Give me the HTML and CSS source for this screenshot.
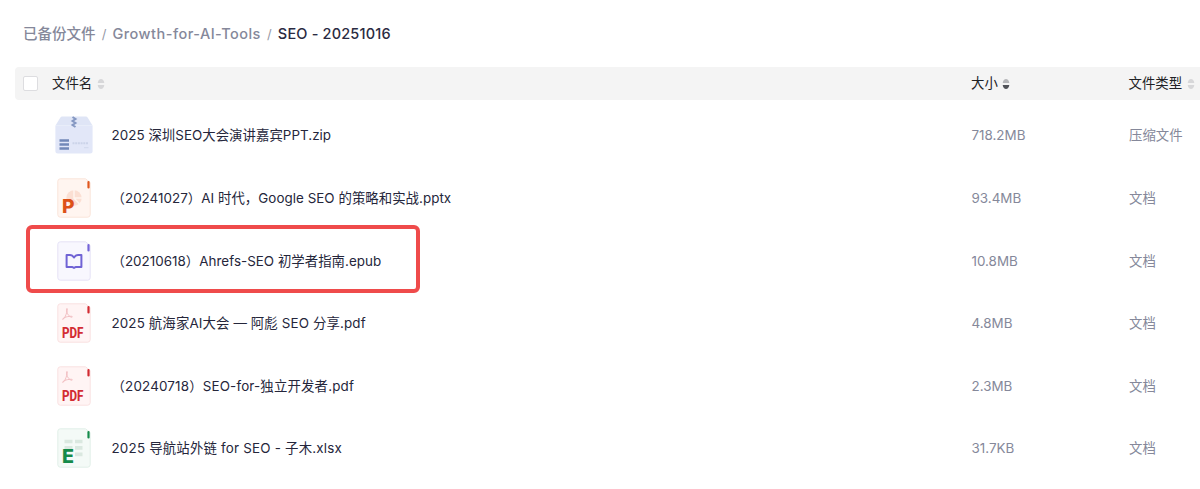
FILE: index.html
```html
<!DOCTYPE html>
<html lang="zh-CN">
  <head>
    <meta charset="UTF-8" />
    <title>已备份文件</title>
    <link rel="stylesheet" href="styles.css">
  </head>
  <body>
    <nav class="breadcrumb">
      <a class="crumb crumb-root">已备份文件</a>
      <span class="sep">/</span>
      <a class="crumb crumb-folder">Growth-for-AI-Tools</a>
      <span class="sep">/</span>
      <span class="crumb current">SEO - 20251016</span>
    </nav>

    <div class="file-table">
      <div class="table-head">
        <div class="head-name">
          <span class="checkbox"></span>
          <span>文件名</span>
          <svg class="sort" viewBox="0 0 8 12"><path class="up" d="M.7 5C1 2.5 2.5 1 4 1s3 1.5 3.3 4z" /><path class="down" d="M.7 7C1 9.5 2.5 11 4 11s3-1.5 3.3-4z" /></svg>
        </div>
        <div class="head-size">
          <span>大小</span>
          <svg class="sort desc" viewBox="0 0 8 12"><path class="up" d="M.7 5C1 2.5 2.5 1 4 1s3 1.5 3.3 4z" /><path class="down" d="M.7 7C1 9.5 2.5 11 4 11s3-1.5 3.3-4z" /></svg>
        </div>
        <div class="head-type">
          <span>文件类型</span>
          <svg class="sort" viewBox="0 0 8 12"><path class="up" d="M.7 5C1 2.5 2.5 1 4 1s3 1.5 3.3 4z" /><path class="down" d="M.7 7C1 9.5 2.5 11 4 11s3-1.5 3.3-4z" /></svg>
        </div>
      </div>

      <div class="table-row">
        <div class="icon">
          <svg width="38" height="38" viewBox="0 0 38 38">
            <path d="M7 .6h24a2 2 0 0 1 1.600.8L37.500 9.500H.5L5.400 1.400A2 2 0 0 1 7 .6z" fill="#dfe5f6" />
            <path d="M.4 9.500h37.200v25.500a2.500 2.500 0 0 1-2.500 2.500H2.900a2.500 2.500 0 0 1-2.500-2.500z" fill="#e2e7f8" />
            <path d="M17.500 1l3 2-3 2 3 2-3 2 3 2" fill="none" stroke="#8598c2" stroke-width="2" />
            <path d="M4.500 24.500H14M4.500 28.500H14M4.500 32.500H14" stroke="#7389b8" stroke-width="2.600" />
            <path d="M17.500 27.200h16" stroke="#ccd4e9" stroke-width="2" stroke-dasharray="2 .7" />
            <path d="M29 31.700h4.500" stroke="#d0d8ec" />
          </svg>
        </div>
        <div class="name name-zip">2025 深圳SEO大会演讲嘉宾PPT.zip</div>
        <div class="size">718.2MB</div>
        <div class="type">压缩文件</div>
      </div>

      <div class="table-row">
        <div class="icon">
          <svg width="34" height="40" viewBox="0 0 34 40">
            <path class="page" d="M3.300.8h25.200l4.700 3.700v32.200a2.500 2.500 0 0 1-2.500 2.500H3.300a2.500 2.500 0 0 1-2.500-2.500V3.300A2.500 2.500 0 0 1 3.300.8z" fill="#fff5f0" stroke="#fae4da" />
            <circle cx="17" cy="20" r="7.700" fill="#fbdfd3" />
            <path d="M17 11.500v8.500h8.500M17 20l5.500 6" fill="none" stroke="#fff5f0" stroke-width="1.500" />
            <path class="tab" d="M31.500 4v5.500" stroke="#e0571e" />
            <text class="letter" x="5" y="34.500" fill="#dd5118" textLength="12.500" lengthAdjust="spacingAndGlyphs">P</text>
          </svg>
        </div>
        <div class="name name-pptx">（20241027）AI 时代，Google SEO 的策略和实战.pptx</div>
        <div class="size">93.4MB</div>
        <div class="type">文档</div>
      </div>

      <div class="table-row marked">
        <div class="icon">
          <svg width="34" height="40" viewBox="0 0 34 40">
            <path class="page" d="M3.300.8h25.200l4.700 3.700v32.200a2.500 2.500 0 0 1-2.500 2.500H3.300a2.500 2.500 0 0 1-2.500-2.500V3.300A2.500 2.500 0 0 1 3.300.8z" fill="#f8f7fe" stroke="#e5e2f6" />
            <path class="tab" d="M31.500 4v5.500" stroke="#7464d8" />
            <path d="M17 16.500c-1-1.600-2.200-2.400-4-2.400H9.600v11.800h5.400l2 1 2-1h5.400V14.100H21c-1.800 0-3 .8-4 2.400z" fill="none" stroke="#7063d5" stroke-width="2" stroke-linejoin="round" />
          </svg>
        </div>
        <div class="name name-epub">（20210618）Ahrefs-SEO 初学者指南.epub</div>
        <div class="size">10.8MB</div>
        <div class="type">文档</div>
      </div>

      <div class="table-row">
        <div class="icon">
          <svg width="34" height="40" viewBox="0 0 34 40">
            <path class="page" d="M3.300.8h25.200l4.700 3.700v32.200a2.500 2.500 0 0 1-2.500 2.500H3.300a2.500 2.500 0 0 1-2.500-2.500V3.300A2.500 2.500 0 0 1 3.300.8z" fill="#fff4f4" stroke="#f9e1e1" />
            <path d="M10 5.500c-1.100 0-.2 4.500 1 6 1.300 2 4 3.500 4.300 2.300.3-1-5.200-.5-7.800.8-2.200 1.100-2.300 2-1.500 1.700 2.300-.7 5.300-10.800 4-10.800z" fill="none" stroke="#efb9bc" stroke-width=".9" />
            <path class="tab" d="M31.500 4v5.500" stroke="#d22a31" />
            <text class="pdf" x="5" y="34.500" textLength="21.500" lengthAdjust="spacingAndGlyphs">PDF</text>
          </svg>
        </div>
        <div class="name name-share">2025 航海家AI大会 — 阿彪 SEO 分享.pdf</div>
        <div class="size">4.8MB</div>
        <div class="type">文档</div>
      </div>

      <div class="table-row">
        <div class="icon">
          <svg width="34" height="40" viewBox="0 0 34 40">
            <path class="page" d="M3.300.8h25.200l4.700 3.700v32.200a2.500 2.500 0 0 1-2.500 2.500H3.300a2.500 2.500 0 0 1-2.500-2.500V3.300A2.500 2.500 0 0 1 3.300.8z" fill="#fff4f4" stroke="#f9e1e1" />
            <path d="M10 5.500c-1.100 0-.2 4.500 1 6 1.300 2 4 3.500 4.300 2.300.3-1-5.200-.5-7.800.8-2.200 1.100-2.300 2-1.500 1.700 2.300-.7 5.300-10.800 4-10.800z" fill="none" stroke="#efb9bc" stroke-width=".9" />
            <path class="tab" d="M31.500 4v5.500" stroke="#d22a31" />
            <text class="pdf" x="5" y="34.500" textLength="21.500" lengthAdjust="spacingAndGlyphs">PDF</text>
          </svg>
        </div>
        <div class="name name-dev">（20240718）SEO-for-独立开发者.pdf</div>
        <div class="size">2.3MB</div>
        <div class="type">文档</div>
      </div>

      <div class="table-row">
        <div class="icon">
          <svg width="34" height="40" viewBox="0 0 34 40">
            <path class="page" d="M3.300.8h25.200l4.700 3.700v32.200a2.500 2.500 0 0 1-2.500 2.500H3.300a2.500 2.500 0 0 1-2.500-2.500V3.300A2.500 2.500 0 0 1 3.300.8z" fill="#f4faf7" stroke="#e1efe8" />
            <path d="M7.500 13.500h8M18 13.500h7.500M7.500 19.800h8M18 19.800h7.500M18 26.300h7.500" stroke="#dae8e0" stroke-width="3.700" />
            <path class="tab" d="M31.500 4v5.500" stroke="#168c4c" />
            <text class="letter" x="5" y="34.500" fill="#148b4a" textLength="12" lengthAdjust="spacingAndGlyphs">E</text>
          </svg>
        </div>
        <div class="name name-xlsx">2025 导航站外链 for SEO - 子木.xlsx</div>
        <div class="size">31.7KB</div>
        <div class="type">文档</div>
      </div>
    </div>
  </body>
</html>
```

FILE: styles.css
```css
body {
  margin: 0;
  padding: 22px 0 0 15px;
  font-family: Inter, "Noto Sans CJK SC", sans-serif;
  font-size: 13.4px;
  line-height: 20px;
  color: #25263b;
  background: #fff;
  overflow: hidden;
}

.breadcrumb {
  display: flex;
  align-items: center;
  height: 24px;
  padding-left: 8px;
  margin-bottom: 21px;
  font-size: 14.5px;
  white-space: nowrap;
}

.crumb {
  color: #85889a;
  font-weight: 500;
}

.crumb-folder {
  letter-spacing: 0.47px;
}

.breadcrumb .current {
  color: #2a2b42;
  letter-spacing: 0.18px;
}

.sep {
  width: 17px;
  text-align: center;
  color: #9699a6;
  font-size: 13px;
}

.table-head,
.table-row {
  display: grid;
  grid-template-columns: 956px 157.5px 1fr;
  align-items: center;
  white-space: nowrap;
}

.table-head {
  height: 33px;
  margin-bottom: 4.15px;
  background: #f4f4f4;
  border-radius: 4px 0 0 4px;
  color: #202124;
}

.table-head span {
  line-height: 21px;
  margin-top: -1px;
}

.head-name,
.head-size,
.head-type {
  display: flex;
  align-items: center;
}

.head-name {
  padding-left: 8px;
}

.checkbox {
  box-sizing: border-box;
  width: 15px;
  height: 15px;
  margin-right: 14px;
  background: #fff;
  border: 1px solid #dddde0;
  border-radius: 2px;
}

.sort {
  width: 8px;
  height: 12px;
  margin-left: 4.5px;
  fill: #d7d7d9;
}

.desc .up {
  fill: #b5b6b9;
}

.desc .down {
  fill: #505258;
}

.table-row {
  position: relative;
  grid-template-columns: 37px 59.5px 860px 157.5px 1fr;
  height: 62.6px;
}

.icon {
  grid-column: 2;
  display: flex;
  justify-content: center;
  width: 44px;
}

.icon svg {
  display: block;
}

.tab {
  stroke-width: 2.2;
  stroke-linecap: round;
}

.name-zip,
.name-pptx {
  letter-spacing: 0.04px;
}

.name-epub {
  letter-spacing: 0.03px;
}

.name-share {
  letter-spacing: 0.13px;
}

.name-dev {
  letter-spacing: 0.17px;
}

.name-xlsx {
  letter-spacing: 0.2px;
}

.size,
.type {
  color: #85889a;
}

.letter {
  font: 800 19px Inter, sans-serif;
}

.pdf {
  font: 800 14px Roboto, sans-serif;
  fill: #d32c33;
}

/* highlight frame drawn over the row */
.marked::after {
  content: "";
  position: absolute;
  box-sizing: border-box;
  left: 11px;
  top: -4px;
  width: 394px;
  height: 68px;
  border: 4px solid #ef4b4b;
  border-radius: 6px;
}
```
